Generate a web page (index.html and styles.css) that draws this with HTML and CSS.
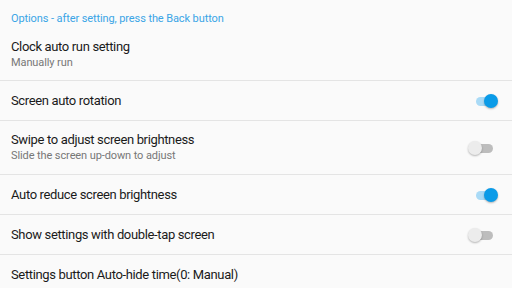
FILE: index.html
```html
<!DOCTYPE html>
<html>
<head>
<meta charset="utf-8">
<link rel="stylesheet" href="styles.css">
</head>
<body>
<div class="screen">
  <div class="header">Options - after setting, press the Back button</div>
  <div class="row two first">
    <div class="texts">
      <div class="title">Clock auto run setting</div>
      <div class="sub">Manually run</div>
    </div>
  </div>
  <div class="row">
    <div class="texts"><div class="title">Screen auto rotation</div></div>
    <div class="switch on"><span class="track"></span><span class="thumb"></span></div>
  </div>
  <div class="row two">
    <div class="texts">
      <div class="title">Swipe to adjust screen brightness</div>
      <div class="sub">Slide the screen up-down to adjust</div>
    </div>
    <div class="switch"><span class="track"></span><span class="thumb"></span></div>
  </div>
  <div class="row">
    <div class="texts"><div class="title">Auto reduce screen brightness</div></div>
    <div class="switch on"><span class="track"></span><span class="thumb"></span></div>
  </div>
  <div class="row">
    <div class="texts"><div class="title">Show settings with double-tap screen</div></div>
    <div class="switch"><span class="track"></span><span class="thumb"></span></div>
  </div>
  <div class="row last">
    <div class="texts"><div class="title">Settings button Auto-hide time(0: Manual)</div></div>
  </div>
</div>
</body>
</html>
```
FILE: styles.css
```css
html, body {
  margin: 0;
  padding: 0;
  background: #fafafa;
}
.screen {
  width: 512px;
  height: 288px;
  overflow: hidden;
  font-family: Roboto, "Noto Sans", sans-serif;
  background: #fafafa;
}
.header {
  height: 28px;
  box-sizing: border-box;
  padding: 12px 0 0 11px;
  font-size: 11px;
  line-height: 14px;
  letter-spacing: -0.1px;
  color: #3aa5e6;
}
.row {
  display: flex;
  align-items: center;
  justify-content: space-between;
  height: 39px;
  padding: 0 14px 0 11px;
  border-bottom: 1px solid #e4e4e4;
}
.row.two { height: 53px; }
.row.first { height: 52px; }
.row.last { border-bottom: none; }
.texts {
  display: flex;
  flex-direction: column;
}
.title {
  font-size: 13px;
  line-height: 16px;
  letter-spacing: -0.35px;
  color: #1a1a1a;
}
.sub {
  font-size: 11px;
  line-height: 15px;
  letter-spacing: -0.1px;
  color: #777777;
}
.switch {
  position: relative;
  width: 30px;
  height: 14px;
}
.track {
  position: absolute;
  left: 8px;
  top: 3px;
  width: 17px;
  height: 9px;
  border-radius: 5px;
  background: #bdbdbd;
}
.thumb {
  position: absolute;
  left: 0;
  top: 0;
  width: 14px;
  height: 14px;
  border-radius: 50%;
  background: #ececec;
  box-shadow: 0 1px 2px rgba(0,0,0,0.28);
}
.switch.on .track { background: #a9daf6; }
.switch.on .thumb {
  left: 16px;
  background: #0a9be8;
}
```
